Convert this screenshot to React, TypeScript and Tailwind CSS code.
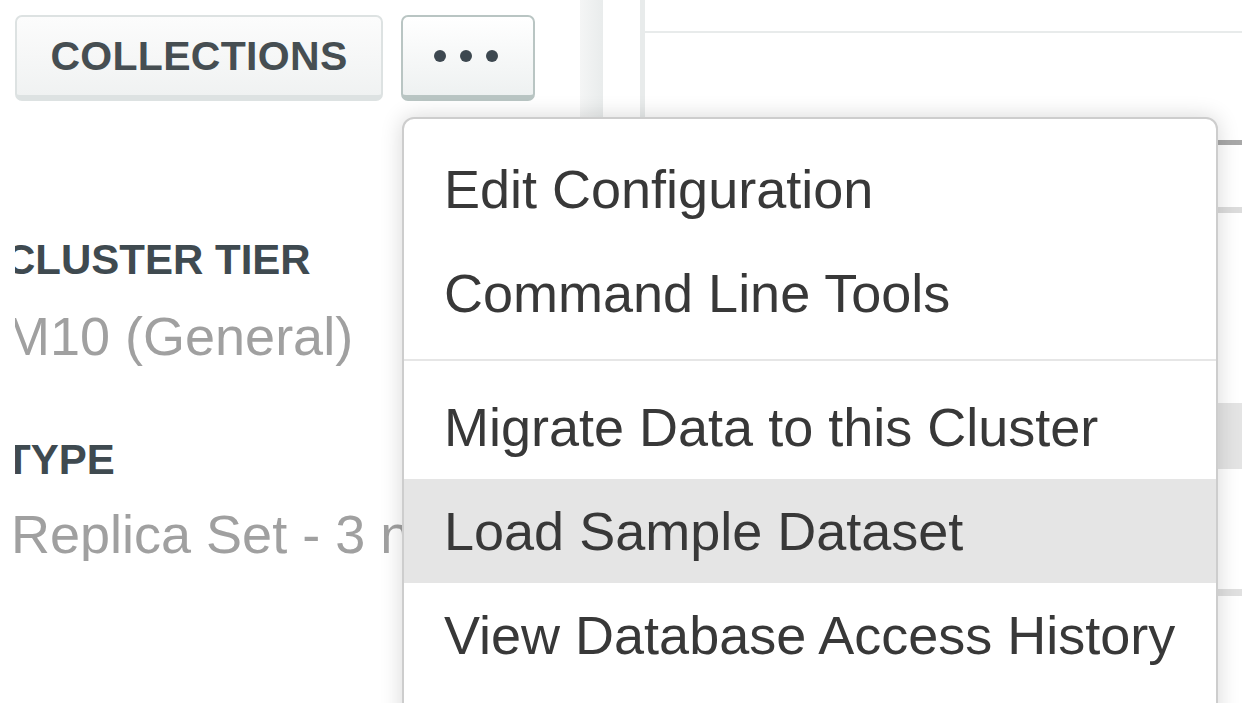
import React from 'react';

const menuItems = [
    ['Edit Configuration', 'Command Line Tools'],
    ['Migrate Data to this Cluster', 'Load Sample Dataset', 'View Database Access History', 'Pause Cluster'],
];

const App: React.FC = () => {
    return (
        <div className="w-[1242px] h-[710px] overflow-hidden bg-white font-['Liberation_Sans',Arial,sans-serif]">
            <div className="relative flex h-[703px] overflow-hidden">
                {/* Left panel */}
                <div className="w-[580px] shrink-0 pl-[15px] pt-[15px]">
                    <div className="flex gap-[18px]">
                        <button className="h-[86px] w-[368px] rounded-[7px] border-2 border-b-[6px] border-[#dde2e2] bg-gradient-to-b from-[#fcfcfc] to-[#f0f2f2] text-[41px] font-bold leading-none tracking-[0.3px] text-[#464e52]">
                            COLLECTIONS
                        </button>
                        <button className="flex h-[86px] w-[134px] items-center justify-center gap-[14px] rounded-[7px] border-[2.5px] border-b-[6px] border-[#b9c5c3] bg-gradient-to-b from-white to-[#eef1f1] pr-[4px]">
                            <span className="h-[12px] w-[12px] rounded-full bg-[#3d4850]" />
                            <span className="h-[12px] w-[12px] rounded-full bg-[#3d4850]" />
                            <span className="h-[12px] w-[12px] rounded-full bg-[#3d4850]" />
                        </button>
                    </div>

                    {/* Cluster details, clipped at the panel edge */}
                    <div className="mt-[138px] overflow-hidden">
                        <div className="-ml-[10px] whitespace-nowrap">
                            <div className="text-[42px] font-bold leading-none text-[#3f4a50]">CLUSTER TIER</div>
                            <div className="mt-[28px] text-[54px] leading-none text-[#a0a0a0]">M10 (General)</div>
                            <div className="mt-[76px] text-[42px] font-bold leading-none text-[#3f4a50]">TYPE</div>
                            <div className="mt-[26px] ml-[6px] text-[54px] leading-none text-[#a0a0a0]">Replica Set - 3 nodes</div>
                        </div>
                    </div>
                </div>

                {/* Divider shadow */}
                <div className="w-[23px] shrink-0 bg-gradient-to-r from-[#f4f5f5] to-[#e9ecec]" />
                <div className="w-[37px] shrink-0" />

                {/* Right card (mostly behind the menu) */}
                <div className="flex-1 border-l-[5px] border-[#e8ebeb]">
                    <div className="h-[33px] border-b-2 border-[#e8ebeb]" />
                    <div className="mt-[107px] h-[5px] bg-[#a8a8a8]" />
                    <div className="mt-[62px] h-[6px] bg-[#dcdcdc]" />
                    <div className="mt-[190px] h-[66px] bg-[#e4e4e4]" />
                    <div className="mt-[120px] h-[7px] bg-[#e0e0e0]" />
                </div>

                {/* Dropdown menu */}
                <div className="absolute left-[402px] top-[117px] h-[620px] w-[816px] rounded-t-[12px] border-2 border-[#cdcdcd] bg-white pt-[18px] shadow-[0_0_22px_rgba(0,0,0,0.16)]">
                    {menuItems.map((group, gi) => (
                        <div key={gi}>
                            {gi > 0 && <div className="my-[14px] h-[2px] bg-[#e6e6e6]" />}
                            {group.map((label) => (
                                <div
                                    key={label}
                                    className={`flex h-[104px] items-center whitespace-nowrap pl-[40px] text-[54px] leading-none text-[#383838] ${
                                        label === 'Load Sample Dataset' ? 'bg-[#e5e5e5]' : ''
                                    }`}
                                >
                                    {label}
                                </div>
                            ))}
                        </div>
                    ))}
                </div>
            </div>
        </div>
    );
};

export default App;
